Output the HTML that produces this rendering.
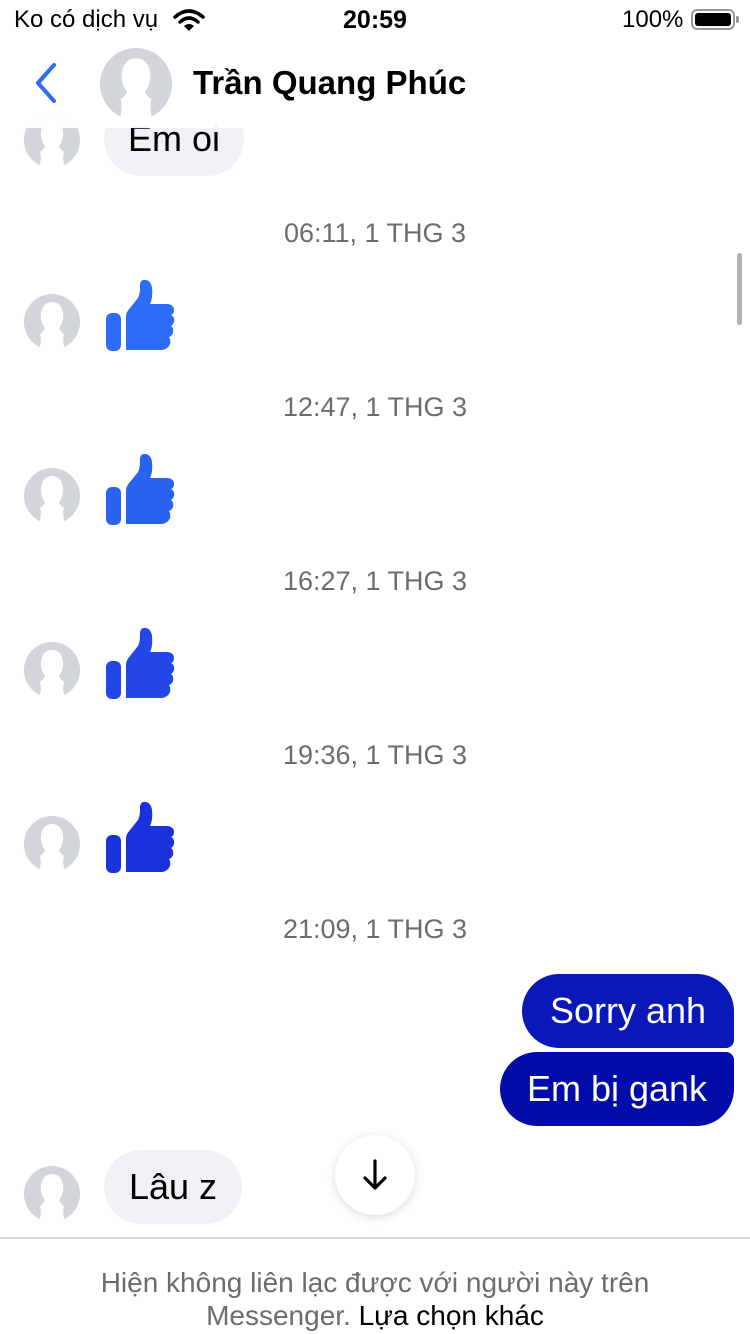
<!DOCTYPE html>
<html><head><meta charset="utf-8"><style>
*{margin:0;padding:0;box-sizing:border-box}
body{width:750px;height:1334px;background:#fff;position:relative;overflow:hidden;font-family:"Liberation Sans",sans-serif}
.abs{position:absolute}
.ts{position:absolute;left:0;width:750px;text-align:center;color:#6c6c70;font-size:27px}
.av{position:absolute;left:24px;width:56px;height:56px}
.th{position:absolute;left:100px;width:80px;height:90px}
.bub{position:absolute;border-radius:37px;font-size:36px;line-height:74px;padding:0 26px}
</style></head><body>
<svg width="0" height="0" style="position:absolute"><defs>
<symbol id="av" viewBox="0 0 56 56"><circle cx="28" cy="28" r="28" fill="#d2d5da"/><path d="M15 56 Q18 46 16 40 Q20 37 21 34 Q16 28 17 19 Q19 8 28 8 Q37 8 39 19 Q40 28 35 34 Q36 37 40 40 Q38 46 41 56 Z" fill="#fff"/></symbol>
<symbol id="th" viewBox="0 0 80 90"><rect x="6" y="43" width="15" height="38" rx="6"/><path d="M26 80 L26 47 Q26 42 30 38 L38 28 Q40 24 40 18 L40 14 Q41 9 46 10 Q51 11 52 18 Q53 28 50 34 L68 34 Q74 35 74 40 Q74 44 71 45 Q75 47 74 52 Q73 55 71 56 Q74 58 73 63 Q72 66 69 67 Q71 70 70 74 Q68 79 62 80 Z"/></symbol>
</defs></svg>

<svg class="av" style="top:112px"><use href="#av"/></svg>
<div class="bub" style="left:104px;top:102px;width:140px;text-align:center;padding:0;background:#f0f1f5;color:#000">Em oi</div>

<div class="abs" style="left:0;top:0;width:750px;height:128px;background:rgba(255,255,255,0.96)"></div>
<div class="abs" style="left:14px;top:6px;font-size:24px;color:#000">Ko có dịch vụ</div>
<svg class="abs" style="left:173px;top:8px" width="32" height="24" viewBox="0 0 32 24"><path d="M2 9 Q16 -3 30 9" stroke="#000" stroke-width="3.5" fill="none" stroke-linecap="round"/><path d="M7 14 Q16 6 25 14" stroke="#000" stroke-width="3.5" fill="none" stroke-linecap="round"/><path d="M16 23 L11 18 Q16 14 21 18 Z" fill="#000"/></svg>
<div class="abs" style="left:0;width:750px;top:6px;text-align:center;font-size:25px;font-weight:bold;color:#000">20:59</div>
<div class="abs" style="left:622px;top:6px;font-size:24px;color:#000">100%</div>
<div class="abs" style="left:691px;top:9px;width:44px;height:21px;border:2px solid #999;border-radius:6px;padding:2px"><div style="width:100%;height:100%;background:#000;border-radius:3px"></div></div>
<div class="abs" style="left:736px;top:16px;width:3px;height:7px;background:#999;border-radius:0 2px 2px 0"></div>

<svg class="abs" style="left:30px;top:62px" width="30" height="42" viewBox="0 0 30 42"><path d="M24 3 L8 21 L24 39" stroke="#2d6cf5" stroke-width="4" fill="none" stroke-linecap="round" stroke-linejoin="round"/></svg>
<svg class="abs" style="left:100px;top:48px;width:72px;height:72px"><use href="#av"/></svg>
<div class="abs" style="left:193px;top:64px;font-size:33px;font-weight:bold;color:#000">Trần Quang Phúc</div>

<div class="abs" style="left:737px;top:253px;width:5px;height:72px;background:#b0b0b0;border-radius:3px"></div>

<div class="ts" style="top:218px">06:11, 1 THG 3</div>
<svg class="av" style="top:294px"><use href="#av"/></svg>
<svg class="th" style="top:270px;fill:#2d6cf5"><use href="#th"/></svg>

<div class="ts" style="top:392px">12:47, 1 THG 3</div>
<svg class="av" style="top:468px"><use href="#av"/></svg>
<svg class="th" style="top:444px;fill:#2a62f0"><use href="#th"/></svg>

<div class="ts" style="top:566px">16:27, 1 THG 3</div>
<svg class="av" style="top:642px"><use href="#av"/></svg>
<svg class="th" style="top:618px;fill:#2247e6"><use href="#th"/></svg>

<div class="ts" style="top:740px">19:36, 1 THG 3</div>
<svg class="av" style="top:816px"><use href="#av"/></svg>
<svg class="th" style="top:792px;fill:#1a32dc"><use href="#th"/></svg>

<div class="ts" style="top:914px">21:09, 1 THG 3</div>
<div class="bub" style="left:522px;top:974px;width:212px;background:#0a18b8;color:#fff;border-radius:37px 37px 8px 37px;text-align:center;padding:0">Sorry anh</div>
<div class="bub" style="left:500px;top:1052px;width:234px;background:#020ca8;color:#fff;border-radius:37px 8px 37px 37px;text-align:center;padding:0">Em bị gank</div>

<svg class="av" style="top:1166px"><use href="#av"/></svg>
<div class="bub" style="left:104px;top:1150px;width:138px;background:#f0f1f5;color:#000;text-align:center;padding:0">Lâu z</div>

<div class="abs" style="left:335px;top:1135px;width:80px;height:80px;border-radius:40px;background:#fff;box-shadow:0 2px 10px rgba(0,0,0,0.15)"></div>
<svg class="abs" style="left:355px;top:1155px" width="40" height="40" viewBox="0 0 40 40"><path d="M20 6 V33 M10 23 L20 33 L30 23" stroke="#000" stroke-width="3.2" fill="none" stroke-linecap="round" stroke-linejoin="round"/></svg>

<div class="abs" style="left:0;top:1237px;width:750px;height:2px;background:#d8d8d8"></div>
<div class="abs" style="left:0;top:1266px;width:750px;text-align:center;font-size:28px;line-height:33px;color:#6c6c70">Hiện không liên lạc được với người này trên<br>Messenger. <span style="color:#000">Lựa chọn khác</span></div>
</body></html>
